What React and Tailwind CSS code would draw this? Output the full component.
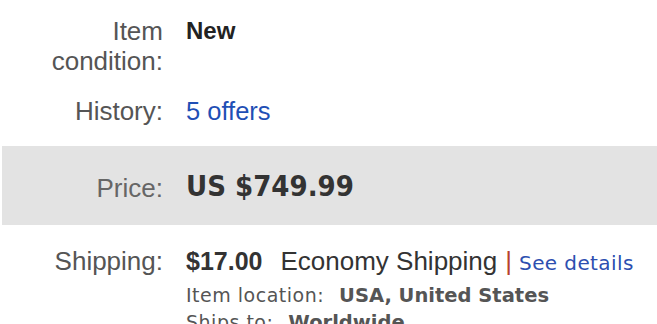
export default function App() {
  return (
    <div className="w-[657px] h-[324px] overflow-hidden bg-white font-['Liberation_Sans',Arial,sans-serif] pt-4">
      <div className="grid grid-cols-[163px_1fr] gap-x-[23px]">
        <div className="text-right text-[26px] leading-[30px] text-[#555]">
          Item
          <br />
          condition:
        </div>
        <div className="text-[24px] leading-[30px] font-bold text-[#222]">New</div>
      </div>
      <div className="grid grid-cols-[163px_1fr] gap-x-[23px] mt-5">
        <div className="text-right text-[26px] leading-[30px] text-[#555]">History:</div>
        <div className="text-[25.5px] leading-[30px] text-[#1f4fb5]">5 offers</div>
      </div>
      <div className="mt-5 ml-[2px] h-[79px] bg-[#e3e3e3] grid grid-cols-[161px_1fr] gap-x-[23px] items-center">
        <div className="text-right text-[26px] leading-[30px] text-[#666] pt-[5px]">Price:</div>
        <div className="font-['DejaVu_Sans_Condensed','DejaVu_Sans',sans-serif] font-bold text-[29px] leading-[34px] text-[#333] tracking-[0px] pt-[1px]">
          US $749.99
        </div>
      </div>
      <div className="grid grid-cols-[163px_1fr] gap-x-[23px] mt-[21px]">
        <div className="text-right text-[26px] leading-[30px] text-[#555]">Shipping:</div>
        <div>
          <div className="flex items-baseline whitespace-nowrap text-[26px] leading-[30px] text-[#333]">
            <span className="font-bold text-[25px]">$17.00</span>
            <span className="ml-[18px]">Economy Shipping</span>
            <span className="ml-[8px] text-[#b8402f]">|</span>
            <span className="ml-[7px] font-['DejaVu_Sans',sans-serif] text-[20px] tracking-[0.4px] text-[#2d4fb0]">See details</span>
          </div>
          <div className="mt-[4px] font-['DejaVu_Sans',sans-serif] text-[19px] leading-[27px] text-[#555] tracking-[0.5px] whitespace-nowrap">
            <span>Item location:</span>
            <span className="ml-[15px] font-bold text-[19.5px] tracking-normal">USA, United States</span>
          </div>
          <div className="font-['DejaVu_Sans',sans-serif] text-[19px] leading-[27px] text-[#555] tracking-[0.5px] whitespace-nowrap">
            <span>Ships to:</span>
            <span className="ml-[15px] font-bold text-[19.5px] tracking-normal">Worldwide</span>
          </div>
        </div>
      </div>
    </div>
  );
}
